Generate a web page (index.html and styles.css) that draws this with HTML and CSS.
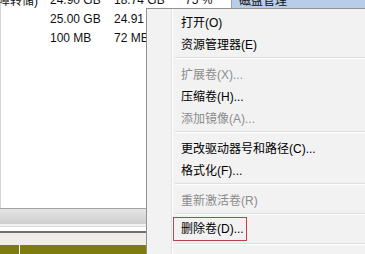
FILE: index.html
```html
<!DOCTYPE html>
<html lang="zh-CN">
<head>
  <meta charset="UTF-8">
  <title>磁盘管理</title>
  <link rel="stylesheet" href="styles.css">
</head>
<body>
  <div class="screen">
    <!-- Volume list -->
    <div class="volumes">
      <table class="volume-table">
        <tr>
          <td class="col-status"><span>(活动, 故障转储)</span></td>
          <td class="col-size">24.90 GB</td>
          <td class="col-free">18.74 GB</td>
          <td class="col-pct">75 %</td>
          <td class="col-tool selected">磁盘管理</td>
        </tr>
        <tr>
          <td class="col-status"><span></span></td>
          <td class="col-size">25.00 GB</td>
          <td class="col-free">24.91 GB</td>
          <td class="col-pct"></td>
          <td class="col-tool"></td>
        </tr>
        <tr>
          <td class="col-status"><span></span></td>
          <td class="col-size">100 MB</td>
          <td class="col-free">72 MB</td>
          <td class="col-pct"></td>
          <td class="col-tool"></td>
        </tr>
      </table>
    </div>

    <!-- Bottom pane -->
    <div class="hscroll"></div>
    <div class="pane-gap"></div>
    <div class="pane-divider"></div>
    <div class="disk-head"></div>
    <div class="disk-bar">
      <div class="segment first"></div>
      <div class="segment"></div>
    </div>

    <!-- Context menu -->
    <ul class="context-menu">
      <li class="menu-item">打开(O)</li>
      <li class="menu-item">资源管理器(E)</li>
      <li class="menu-sep"></li>
      <li class="menu-item disabled">扩展卷(X)...</li>
      <li class="menu-item">压缩卷(H)...</li>
      <li class="menu-item disabled">添加镜像(A)...</li>
      <li class="menu-sep"></li>
      <li class="menu-item">更改驱动器号和路径(C)...</li>
      <li class="menu-item">格式化(F)...</li>
      <li class="menu-sep"></li>
      <li class="menu-item disabled">重新激活卷(R)</li>
      <li class="menu-sep"></li>
      <li class="menu-item marked"><span class="mark">删除卷(D)...</span></li>
      <li class="menu-sep"></li>
      <li class="menu-item">属性(P)</li>
    </ul>
  </div>
</body>
</html>
```

FILE: styles.css
```css
/* General */
body {
  margin: 0;
  font-family: "Liberation Sans", "Noto Sans CJK SC", sans-serif;
  font-size: 12px;
  color: #111;
  background: #fff;
}

.screen {
  position: relative;
  width: 365px;
  height: 254px;
  overflow: hidden;
  display: flex;
  flex-direction: column;
}

/* Volume list */
.volumes {
  flex: 1;
  min-height: 0;
  border-left: 1px solid #d4d4d4;
  background: #fff;
}

.volume-table {
  border-collapse: collapse;
  margin-top: -10px;
  margin-left: -1px;
  table-layout: fixed;
  width: 400px;
}

.volume-table td {
  height: 19px;
  padding: 0;
  white-space: nowrap;
  overflow: hidden;
}

.col-status {
  width: 50px;
}

.col-status span {
  display: flex;
  justify-content: flex-end;
  width: 38px;
}

.col-size {
  width: 64px;
}

.col-free {
  width: 71px;
}

.col-pct {
  width: 46px;
}

.col-tool {
  padding-left: 7px !important;
}

.col-tool.selected {
  background: #b7cde8;
  border-left: 1px solid #8aa8cc;
}

/* Bottom pane */
.hscroll {
  flex-shrink: 0;
  height: 15px;
  border-top: 1px solid #a3a3a3;
  background: linear-gradient(#e6e6e6, #cdcdcd);
}

.pane-gap {
  flex-shrink: 0;
  height: 7px;
  background: linear-gradient(#f2f2f2 0 2px, #dcdcdc 2px 3px, #fff 3px);
}

.pane-divider {
  flex-shrink: 0;
  height: 2px;
  background: #6f6f6f;
}

.disk-head {
  flex-shrink: 0;
  height: 12px;
  background: linear-gradient(#ececec, #f1efe2);
}

.disk-bar {
  flex-shrink: 0;
  height: 9px;
  display: flex;
  gap: 1px;
  background: #fff;
}

.segment {
  flex: 1;
  background: #7e7b10;
}

.segment.first {
  flex: 0 0 19px;
}

/* Context menu */
.context-menu {
  position: absolute;
  left: 146px;
  top: 8px;
  width: 240px;
  height: 260px;
  margin: 0;
  padding: 1px 0 0;
  list-style: none;
  border: 1px solid #939393;
  background: linear-gradient(to right, #f2f2f2 0 24px, #e0e1e1 24px 25px, #fff 25px 26px, #f2f2f2 26px);
  color: #000;
}

.menu-item {
  display: flex;
  align-items: center;
  height: 22px;
  padding-left: 34px;
  white-space: nowrap;
}

.menu-item.disabled {
  color: #8c8c8c;
}

.menu-sep {
  margin: 3px 0 3px 28px;
  border-top: 1px solid #dedede;
  border-bottom: 1px solid #fff;
}

.mark {
  display: inline-block;
  box-sizing: border-box;
  height: 24px;
  line-height: 22px;
  margin-left: -8px;
  padding: 0 2px 0 7px;
  border: 1px solid #b8434b;
}
```
